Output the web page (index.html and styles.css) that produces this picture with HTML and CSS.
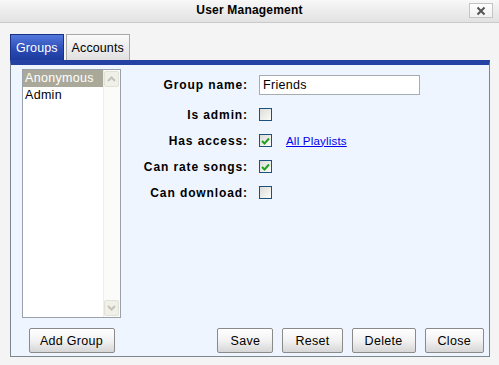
FILE: index.html
```html
<!DOCTYPE html>
<html lang="en">
<head>
    <meta charset="UTF-8">
    <title>User Management</title>
    <link rel="stylesheet" href="styles.css">
</head>
<body>
    <div class="titlebar">
        <span class="title">User Management</span>
        <button class="close-btn" title="Close">
            <svg width="10" height="10" viewBox="0 0 10 10"><path d="M1.5 1.5 L8.5 8.5 M8.5 1.5 L1.5 8.5" stroke="#555" stroke-width="2"/></svg>
        </button>
    </div>
    <div class="dialog">
        <div class="tabs">
            <div class="tab active">Groups</div>
            <div class="tab">Accounts</div>
        </div>
        <div class="panel">
            <div class="main">
                <div class="listbox">
                    <div class="items">
                        <div class="item selected">Anonymous</div>
                        <div class="item">Admin</div>
                    </div>
                    <div class="scrollbar">
                        <div class="arrow">
                            <svg width="9" height="6" viewBox="0 0 9 6"><path d="M1 5 L4.5 1.5 L8 5" fill="none" stroke="#c4c4bc" stroke-width="2"/></svg>
                        </div>
                        <div class="arrow">
                            <svg width="9" height="6" viewBox="0 0 9 6"><path d="M1 1 L4.5 4.5 L8 1" fill="none" stroke="#c4c4bc" stroke-width="2"/></svg>
                        </div>
                    </div>
                </div>
                <div class="form">
                    <label class="field-label">Group name:</label>
                    <div class="field"><input type="text" class="text-input" value="Friends"></div>
                    <label class="field-label">Is admin:</label>
                    <div class="field"><span class="check"></span></div>
                    <label class="field-label">Has access:</label>
                    <div class="field">
                        <span class="check checked"><svg width="9" height="8" viewBox="0 0 9 8"><path d="M1 4 L3.5 6.5 L8 1.5" fill="none" stroke="#21a121" stroke-width="2"/></svg></span>
                        <a href="#" class="link">All Playlists</a>
                    </div>
                    <label class="field-label">Can rate songs:</label>
                    <div class="field"><span class="check checked"><svg width="9" height="8" viewBox="0 0 9 8"><path d="M1 4 L3.5 6.5 L8 1.5" fill="none" stroke="#21a121" stroke-width="2"/></svg></span></div>
                    <label class="field-label">Can download:</label>
                    <div class="field"><span class="check"></span></div>
                </div>
            </div>
            <div class="footer">
                <div class="footer-left"><button class="btn btn-add">Add Group</button></div>
                <div class="actions">
                    <button class="btn">Save</button>
                    <button class="btn">Reset</button>
                    <button class="btn">Delete</button>
                    <button class="btn">Close</button>
                </div>
            </div>
        </div>
    </div>
</body>
</html>
```

FILE: styles.css
```css
body {
    margin: 0;
    background-color: #f4f4f4;
    font-family: "Liberation Sans", Arial, sans-serif;
    font-size: 12px;
    color: #000;
}
.titlebar {
    height: 22px;
    display: flex;
    align-items: center;
    justify-content: center;
    position: relative;
    background: linear-gradient(#f8f8f8 0%, #f4f4f4 15%, #e2e2e2 100%);
    border-bottom: 1px solid #c9c9c9;
}
.title {
    font-weight: bold;
    letter-spacing: 0.2px;
    margin-top: -2px;
}
.close-btn {
    position: absolute;
    right: 6px;
    top: 3px;
    width: 24px;
    height: 15px;
    padding: 0;
    display: flex;
    align-items: center;
    justify-content: center;
    background: linear-gradient(#ffffff, #f2f2f2);
    border: 1px solid #c4c4c4;
}
.dialog {
    padding: 11px 9px 0 10px;
}
.tabs {
    display: flex;
    gap: 2px;
    height: 26px;
}
.tab {
    padding: 0 5px;
    display: flex;
    align-items: center;
    font-size: 12.5px;
    letter-spacing: 0.1px;
    border: 1px solid #a8a8a8;
    border-bottom: none;
    background: linear-gradient(#fafafa, #e0e0e0);
}
.tab.active {
    color: #fff;
    border-color: #1a2f86;
    background: linear-gradient(#5378dc, #2a4ab4 60%, #1d3c9e);
}
.panel {
    border: 1px solid #7d8791;
    border-top: 5px solid #2342a4;
    background-color: #eef5fe;
    padding: 4px 5px 3px 11px;
}
.main {
    display: flex;
}
.listbox {
    width: 97px;
    height: 247px;
    border: 1px solid #99a2ab;
    background-color: #fff;
    display: flex;
}
.items {
    flex: 1;
}
.item {
    height: 17px;
    line-height: 17px;
    padding-left: 2px;
    font-size: 12.5px;
    letter-spacing: 0.3px;
}
.item.selected {
    background-color: #aaa999;
    color: #fff;
}
.scrollbar {
    width: 16px;
    border-left: 1px solid #eeeee8;
    background-color: #fbfbf9;
    display: flex;
    flex-direction: column;
    justify-content: space-between;
}
.arrow {
    height: 14px;
    margin: 1px 1px 1px 0;
    border: 1px solid #e2e1d6;
    border-radius: 2px;
    background-color: #f0f0e8;
    display: flex;
    align-items: center;
    justify-content: center;
}
.form {
    margin: 6px 0 0 11px;
    display: grid;
    grid-template-columns: 116px 200px;
    grid-template-rows: 20px 13px 13px 13px 13px;
    column-gap: 11px;
    row-gap: 13px;
    align-items: center;
}
.field-label {
    text-align: right;
    font-weight: bold;
    letter-spacing: 0.9px;
    white-space: nowrap;
}
.field {
    display: flex;
    align-items: center;
    gap: 14px;
}
.text-input {
    box-sizing: border-box;
    width: 161px;
    height: 20px;
    border: 1px solid #a5acb2;
    padding: 0 3px;
    font-family: "Liberation Sans", Arial, sans-serif;
    font-size: 12.5px;
    letter-spacing: 0.3px;
}
.check {
    box-sizing: border-box;
    width: 13px;
    height: 13px;
    border: 1px solid #1c5180;
    background: linear-gradient(135deg, #dcdcd7, #fbfbf9);
    display: flex;
    align-items: center;
    justify-content: center;
}
.link {
    color: #0000ee;
    font-size: 11.5px;
    letter-spacing: 0.2px;
}
.footer {
    display: flex;
    margin-top: 10px;
}
.footer-left {
    width: 99px;
    display: flex;
    justify-content: center;
}
.actions {
    flex: 1;
    display: flex;
    justify-content: flex-end;
    gap: 9px;
}
.btn {
    height: 25px;
    min-width: 56px;
    padding: 0 12px;
    white-space: nowrap;
    font-family: "Liberation Sans", Arial, sans-serif;
    font-size: 12.5px;
    letter-spacing: 0.3px;
    color: #000;
    border: 1px solid #8a8a8a;
    border-radius: 2px;
    background: linear-gradient(#ffffff, #f2f2f2 50%, #d6d6d6);
}
.btn-add {
    width: 86px;
    padding: 0;
}
```
